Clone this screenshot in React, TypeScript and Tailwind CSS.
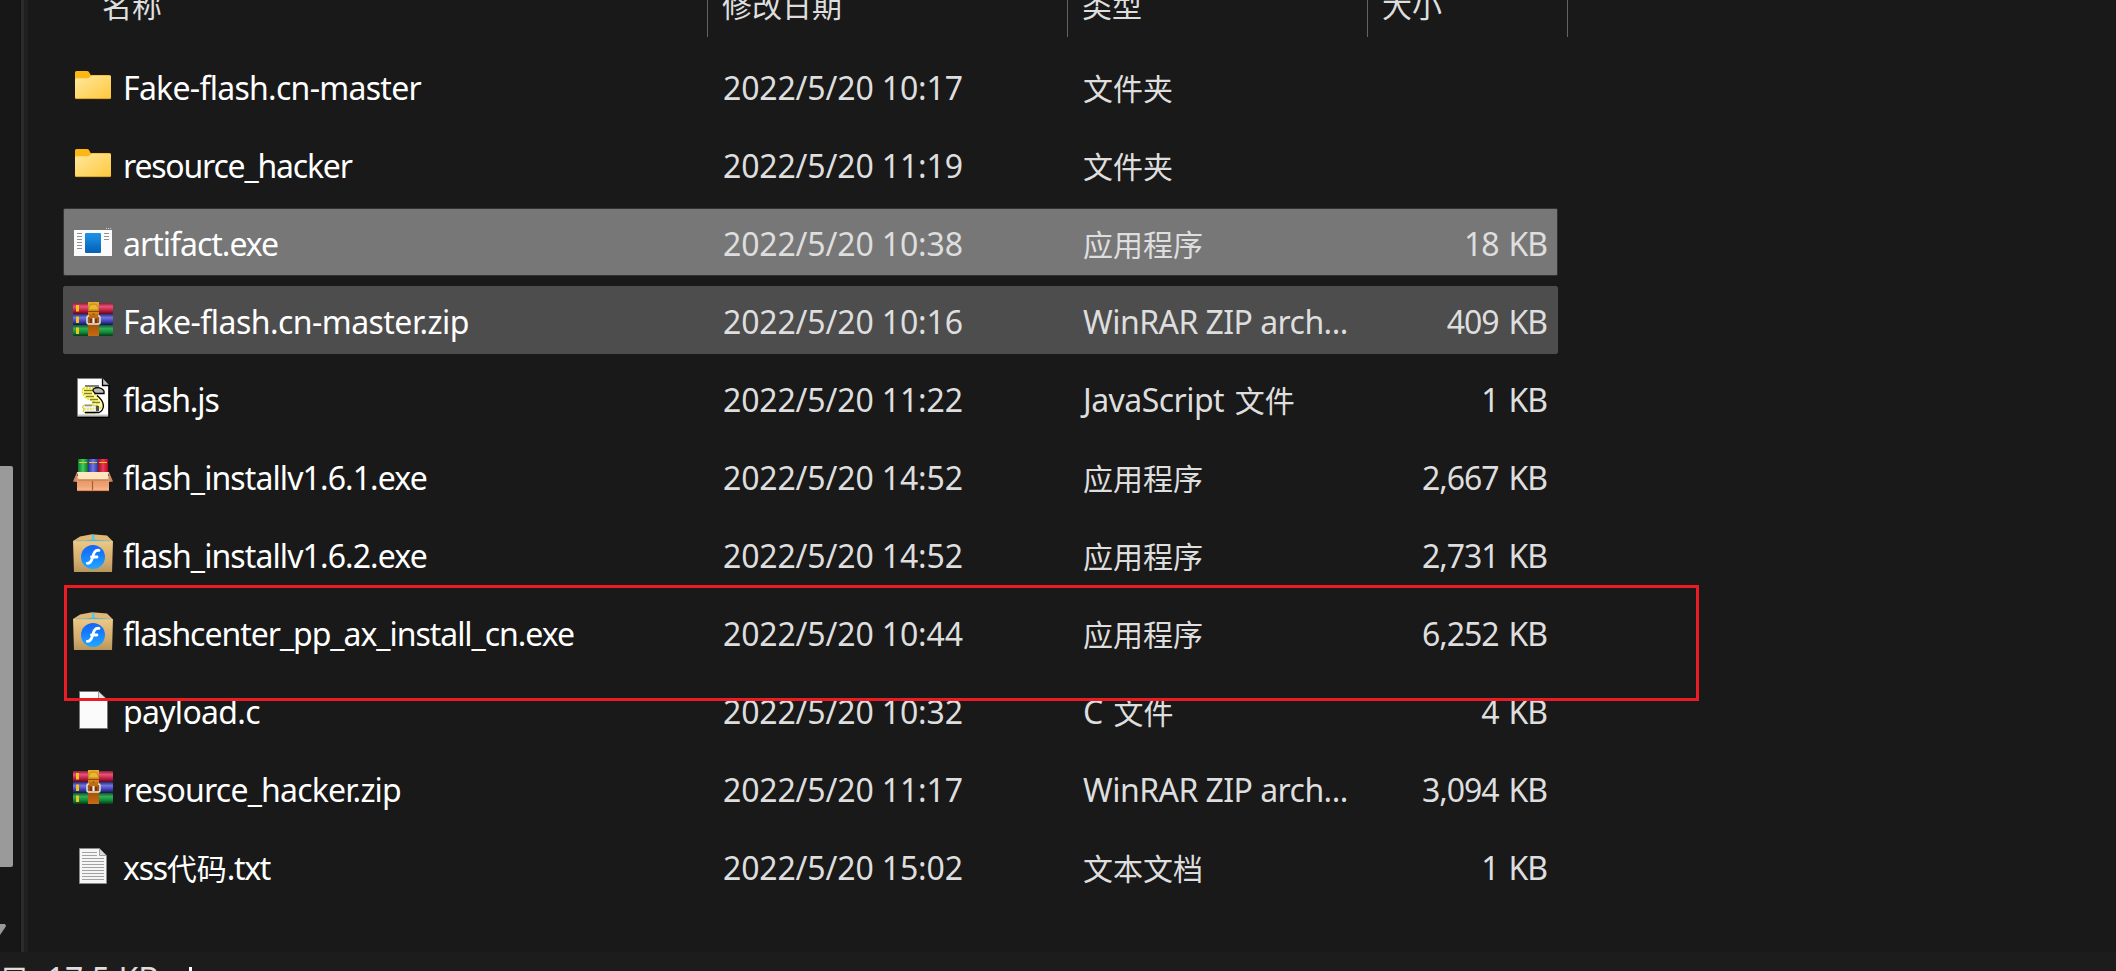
import type { ReactNode } from "react";

type IconKind = "folder" | "app" | "zip" | "js" | "sfx" | "flash" | "blank" | "text";

interface FileRow {
  icon: IconKind;
  name: string;
  tracking: string;
  date: string;
  type: string;
  size: string;
  state?: "selected" | "hover";
}

const rows: FileRow[] = [
  { icon: "folder", name: "Fake-flash.cn-master", tracking: "tracking-[-0.72px]", date: "2022/5/20 10:17", type: "文件夹", size: "" },
  { icon: "folder", name: "resource_hacker", tracking: "tracking-[-1.2px]", date: "2022/5/20 11:19", type: "文件夹", size: "" },
  { icon: "app", name: "artifact.exe", tracking: "tracking-[-1px]", date: "2022/5/20 10:38", type: "应用程序", size: "18 KB", state: "selected" },
  { icon: "zip", name: "Fake-flash.cn-master.zip", tracking: "tracking-[-0.54px]", date: "2022/5/20 10:16", type: "WinRAR ZIP arch...", size: "409 KB", state: "hover" },
  { icon: "js", name: "flash.js", tracking: "tracking-[-1.1px]", date: "2022/5/20 11:22", type: "JavaScript 文件", size: "1 KB" },
  { icon: "sfx", name: "flash_installv1.6.1.exe", tracking: "tracking-[-0.9px]", date: "2022/5/20 14:52", type: "应用程序", size: "2,667 KB" },
  { icon: "flash", name: "flash_installv1.6.2.exe", tracking: "tracking-[-0.9px]", date: "2022/5/20 14:52", type: "应用程序", size: "2,731 KB" },
  { icon: "flash", name: "flashcenter_pp_ax_install_cn.exe", tracking: "tracking-[-1.04px]", date: "2022/5/20 10:44", type: "应用程序", size: "6,252 KB" },
  { icon: "blank", name: "payload.c", tracking: "tracking-[-0.7px]", date: "2022/5/20 10:32", type: "C 文件", size: "4 KB" },
  { icon: "zip", name: "resource_hacker.zip", tracking: "tracking-[-0.8px]", date: "2022/5/20 11:17", type: "WinRAR ZIP arch...", size: "3,094 KB" },
  { icon: "text", name: "xss代码.txt", tracking: "tracking-[-1.3px]", date: "2022/5/20 15:02", type: "文本文档", size: "1 KB" },
];

function Gradients() {
  const stops: [string, string[]][] = [
    ["g-red", ["#8d1f33", "#e8527a", "#c21f45", "#5d0a1c"]],
    ["g-blue", ["#2a2a72", "#7276de", "#4040b4", "#16164c"]],
    ["g-green", ["#0f5a26", "#2fae56", "#13883a", "#053a15"]],
    ["g-belt", ["#e5b02c", "#d58216", "#a85208", "#c86a14"]],
    ["g-card", ["#f3b184", "#e89a68", "#f0a374", "#ffb98c"]],
    ["g-kraft", ["#edc886", "#dfb878", "#d2ac6e", "#b8955c"]],
    ["g-disc", ["#1565f5", "#1677fa", "#1a90ff", "#22a8ff"]],
    ["g-app", ["#1a93e6", "#1585d8", "#0c70c8", "#0862b4"]],
  ];
  const across: [string, string[]][] = [
    ["h-red", ["#8d0f24", "#ef3a55", "#b30a28"]],
    ["h-blue", ["#2a2f90", "#6f78e6", "#30358f"]],
    ["h-green", ["#0c7d2c", "#3fcf60", "#0b6e28"]],
  ];
  return (
    <svg className="absolute h-0 w-0">
      <defs>
        {stops.map(([id, colors]) => (
          <linearGradient key={id} id={id} x1="0" y1="0" x2="0" y2="1">
            {colors.map((c, i) => (
              <stop key={i} offset={i / (colors.length - 1)} stopColor={c} />
            ))}
          </linearGradient>
        ))}
        {across.map(([id, colors]) => (
          <linearGradient key={id} id={id} x1="0" y1="0" x2="1" y2="0">
            {colors.map((c, i) => (
              <stop key={i} offset={i / (colors.length - 1)} stopColor={c} />
            ))}
          </linearGradient>
        ))}
        <linearGradient id="g-folder" x1="0" y1="0" x2="1" y2="1">
          <stop offset="0" stopColor="#ffe8a0" />
          <stop offset="1" stopColor="#ffc83a" />
        </linearGradient>
      </defs>
    </svg>
  );
}

const art: Record<IconKind, ReactNode> = {
  folder: (
    <>
      <path d="M2 6.5Q2 5 3.5 5H14q1.3 0 2 1l1.6 3H36.5Q38 9 38 10.5V20H2Z" fill="#fcb714" />
      <path d="M2 14Q2 12.3 3.6 12.3H14.5q1.2 0 2-.8l1.2-1q.9-.8 2-.8H36.5Q38 9.700 38 11V31.500Q38 33 36.500 33H3.500Q2 33 2 31.500Z" fill="url(#g-folder)" />
      <path d="M2.300 31.500Q2.600 32.600 3.700 32.600H36.300Q37.400 32.600 37.700 31.500" fill="none" stroke="#e0a020" strokeWidth="1" />
    </>
  ),
  app: (
    <>
      <path d="M33 6.500h1M35 6.500h1M37 6.500h1" stroke="#d0d0d0" />
      <rect x="1" y="8" width="38" height="26" fill="#fbfbfb" />
      <rect x="12" y="11" width="16" height="20" rx="1" fill="url(#g-app)" />
      <path d="M4 11.500h5M4 14.500h5M4 17.500h5M4 20.500h5M4 23.500h5M4 26.500h5M31 11.500h5M31 14.500h5M31 17.500h5" stroke="#8e9296" />
    </>
  ),
  zip: (
    <>
      <rect x="0" y="3" width="40" height="11" rx="1" fill="url(#g-red)" />
      <rect x="0" y="14" width="40" height="11" rx="1" fill="url(#g-blue)" />
      <rect x="0" y="25" width="40" height="11" rx="1" fill="url(#g-green)" />
      <path d="M3 5h3v6.500H3zM3 16.500h3V23H3zM3 27.500h3V34H3z" fill="#f5c21c" />
      <rect x="15" y="2" width="11" height="34" fill="url(#g-belt)" />
      <path d="M15.500 10Q15.500 4 20.500 4T25.500 10Z" fill="#e8b830" stroke="#b97c10" strokeWidth=".8" />
      <path d="M15 11.500h11" stroke="#8a4a08" />
      <path d="M20.500 13.500v2" stroke="#6b3604" strokeWidth="1.500" />
      <rect x="14" y="16" width="13" height="8" rx="1.500" fill="#a35410" stroke="#e4e4e4" strokeWidth="1.500" />
      <path d="M16 14.500h9v3.500h-9z" fill="#c06c14" />
      <path d="M20.500 18v5" stroke="#f4f4f4" strokeWidth="2" />
      <path d="M18 19v4M23 19v4" stroke="#4a2604" strokeWidth="1.200" />
    </>
  ),
  js: (
    <>
      <path d="M4.500 .5H29.500L35.500 7V38.500H4.500Z" fill="#fff" stroke="#808080" />
      <path d="M5 37.500H35" stroke="#c0c0c0" strokeWidth="2" />
      <path d="M29.500 .5V7.500H36Z" fill="#c0c0c0" />
      <path d="M29.500 .5V7.500H36M36 7V39.500H4" fill="none" stroke="#000" strokeWidth="1.300" />
      <path d="M12 8H26" stroke="#808080" strokeWidth="2" />
      <path d="M10 10H24Q20 11.500 21 15L28 21.500Q31 26 28.500 30H24V25L13 20Q8 15 10 10Z" fill="#fffdb0" stroke="#e6dc00" strokeDasharray="2 1" strokeWidth="1.300" />
      <path d="M11 12.500H20M11 15.500H19M13 18.500H21M17 21.500H25M19 24.500H27" stroke="#8c8400" strokeWidth="1.500" />
      <path d="M22 15Q18 12 22 10Q28 8.500 31 13V15.500H22Z" fill="#b8b8b8" stroke="#000" strokeWidth="1.300" />
      <path d="M11 27H21Q25 28 23 30.500Q26 34 22 35H12Q9 33.500 11 31.500Q8 29 11 27Z" fill="#f2f2ea" stroke="#c9c000" strokeWidth="1" />
      <path d="M12 34.500H26Q30 33 30.500 28Q30 22 24 17.500" fill="none" stroke="#000" strokeWidth="1.300" />
      <path d="M11 31H21" stroke="#e6dc00" strokeDasharray="2 1" strokeWidth="1.200" />
      <path d="M23 27.500V33H26V28Z" fill="#505050" />
      <path d="M12 27.500H19" stroke="#909090" strokeWidth="1.500" />
    </>
  ),
  sfx: (
    <>
      <rect x="5" y="3" width="10" height="14" fill="url(#h-green)" />
      <rect x="15" y="3" width="10" height="14" fill="url(#h-blue)" />
      <rect x="25" y="3" width="10" height="14" fill="url(#h-red)" />
      <path d="M6 6.500h8M16 6.500h8M26 6.500h8" stroke="#f3c51e" strokeWidth="1.200" />
      <path d="M4 16L0 25.500L4 26ZM36 16L40 25.500L36 26Z" fill="#c98a68" />
      <rect x="4" y="20" width="32" height="15" fill="url(#g-card)" />
      <path d="M4 16H36L34.500 23.500H5.500Z" fill="#fde5c0" />
      <path d="M5 24H35" stroke="#c07a50" strokeWidth="1.200" />
      <path d="M19.500 25V35" stroke="#a85c34" strokeWidth="1.200" />
      <path d="M4 34.600H36" stroke="#d98358" />
    </>
  ),
  flash: (
    <>
      <path d="M0 7L7 2.500L19 .3L34 1.500L40 7.500L20 9Z" fill="#dfb878" />
      <path d="M12 6.800L19.500 5.400L33 6.800L20 7.800Z" fill="#35b6e8" />
      <path d="M19 1h2.200l.4 5h-2.600Z" fill="#4fc8f2" />
      <path d="M0 7H40L39 38H1Z" fill="url(#g-kraft)" />
      <path d="M3 6.800H37" stroke="#7fb9b4" strokeWidth=".8" />
      <circle cx="20" cy="23" r="12" fill="url(#g-disc)" />
      <path d="M26 16.300C21 15.500 20.500 21 19 25C18 28 16.500 29.300 14.300 29.300M18.500 23H24" fill="none" stroke="#fff" strokeWidth="2.800" strokeLinecap="round" />
    </>
  ),
  blank: (
    <>
      <path d="M6.500 1.500H25.500L34.500 10.500V38.500H6.500Z" fill="#fbfbfb" stroke="#777" />
      <path d="M25.500 1.500V9.500H34Z" fill="#e4e4e4" stroke="#8a8a8a" strokeWidth=".8" />
    </>
  ),
  text: (
    <>
      <path d="M6.500 2.500H26.500L33.500 9.500V37.500H6.500Z" fill="#f6f6f6" stroke="#8a8a8a" />
      <path d="M26.500 2.500V9.500H33.500Z" fill="#dcdcdc" stroke="#8a8a8a" strokeWidth=".8" />
      <path d="M9 6.500H24M9 9.500H24M9 12.500H31M9 15.500H31M9 18.500H31M9 21.500H31M9 24.500H31M9 27.500H31M9 30.500H31M9 33.500H31" stroke="#a2a2a2" />
    </>
  ),
};

function FileIcon({ kind }: { kind: IconKind }) {
  return (
    <svg className="h-10 w-10 shrink-0" viewBox="0 0 40 40">
      {art[kind]}
    </svg>
  );
}

// Han characters are set slightly smaller than the Latin text beside them.
function Label({ text }: { text: string }) {
  const parts = text.split(/([\u4e00-\u9fff]+)/);
  return (
    <>
      {parts.map((part, i) =>
        i % 2 === 1 ? (
          <span
            key={i}
            className={`text-[30px] leading-none tracking-normal ${parts[i - 1].endsWith(" ") ? "ml-[3px]" : ""}`}
          >
            {part}
          </span>
        ) : (
          part
        ),
      )}
    </>
  );
}

const rowState = {
  selected: "bg-[#777777] border-[#333333]",
  hover: "bg-[#4d4d4d] border-[#4d4d4d]",
  none: "border-transparent",
};

function Row({ row }: { row: FileRow }) {
  return (
    <div className={`flex h-[68px] w-[1495px] items-center rounded-[2px] border pl-[9px] ${rowState[row.state ?? "none"]}`}>
      <FileIcon kind={row.icon} />
      <div className={`w-[600px] pt-[4px] pl-[10px] text-white ${row.tracking}`}>
        <Label text={row.name} />
      </div>
      <div className="w-[360px] pt-[4px] pl-[10px] tracking-[-0.15px]">{row.date}</div>
      <div className="w-[300px] pt-[4px] pl-[10px] tracking-[-0.55px]">
        <Label text={row.type} />
      </div>
      <div className="w-[174px] pt-[4px] text-right tracking-[-1.1px] [word-spacing:3px]">{row.size}</div>
    </div>
  );
}

export default function App() {
  return (
    <div className="relative flex h-[971px] w-[2116px] flex-col overflow-hidden bg-[#191919] font-['Noto_Sans','Noto_Sans_CJK_SC',sans-serif] text-[32px] leading-[40px] whitespace-nowrap text-[#dedede]">
      <Gradients />
      <div className="flex h-[952px]">
        <div className="flex w-[20px] flex-col bg-[#171717] pt-[466px]">
          <div className="h-[401px] w-[13px] rounded-tr-[2px] rounded-br-[2px] bg-[#9a9a9a]" />
          <svg className="mt-[57px] h-[12px] w-[7px]" viewBox="0 0 7 12">
            <path d="M0 0H4.500Q6.500 .5 5.500 3L0 11Z" fill="#9a9a9a" />
          </svg>
        </div>
        <div className="w-px bg-[#141414]" />
        <div className="w-[3px] bg-[#2b2b2b]" />
        <div className="w-[4px] bg-[#202020]" />
        <div className="flex flex-col pl-[35px]">
          <div className="flex h-[52px] text-[30px]">
            <div className="h-[37px] w-[645px] border-r border-[#636363] pl-[39px]">
              <div className="-mt-[14px]">名称</div>
            </div>
            <div className="h-[37px] w-[360px] border-r border-[#636363] pl-[14px]">
              <div className="-mt-[14px]">修改日期</div>
            </div>
            <div className="h-[37px] w-[300px] border-r border-[#636363] pl-[14px]">
              <div className="-mt-[14px]">类型</div>
            </div>
            <div className="h-[37px] w-[200px] border-r border-[#636363] pl-[14px]">
              <div className="-mt-[14px]">大小</div>
            </div>
          </div>
          <div className="flex flex-col gap-[10px]">
            {rows.map((row) => (
              <Row key={row.name} row={row} />
            ))}
          </div>
        </div>
      </div>
      <div className="flex h-[19px] overflow-hidden bg-[#1c1c1c]">
        <div className="flex w-[189px] justify-end pt-[7px] pr-[30px]">
          <div className="flex gap-[17px]">
            <span>
              <Label text="选中 1 个项目" />
            </span>
            <span>17.5 KB</span>
          </div>
        </div>
        <div className="mt-[15px] h-[4px] w-[3px] bg-white" />
      </div>
      <div className="absolute top-[585px] left-[64px] h-[116px] w-[1635px] border-[3px] border-[#ed1c24]" />
    </div>
  );
}
